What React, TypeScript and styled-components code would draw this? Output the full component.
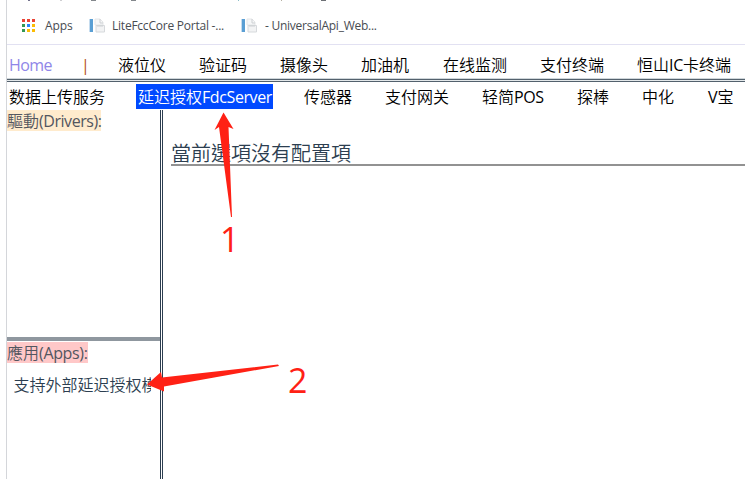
import React from 'react';
import styled, { createGlobalStyle } from 'styled-components';

const Global = createGlobalStyle`
  * { box-sizing: border-box; }
  body { margin: 0; background: #fff; overflow: hidden; }
`;

const Page = styled.div`
  position: relative;
  width: 745px;
  height: 479px;
  padding-left: 6px;
  overflow: hidden;
  background: #fff;
  color: #2c3e50;
  font-family: 'Open Sans', 'Noto Sans CJK SC', sans-serif;
  font-size: 16px;
`;

const Frame = styled.div`
  display: flex;
  flex-direction: column;
  height: 100%;
  border-left: 1px solid #d4d6da;
`;

const AddressBar = styled.div`
  height: 4px;
  flex: none;
  display: flex;
  align-items: flex-start;
`;

const Descender = styled.span<{ $gap: number; $width: number; $color: string }>`
  flex: none;
  width: ${(p) => p.$width}px;
  height: 1px;
  margin-left: ${(p) => p.$gap}px;
  background: ${(p) => p.$color};
`;

const Bookmarks = styled.div`
  height: 41px;
  flex: none;
  display: flex;
  align-items: center;
  padding: 3px 0 0 15px;
  border-bottom: 1px solid #e2e1f2;
`;

const Bookmark = styled.div<{ $width: number; $spacing?: number; $gap: number }>`
  display: flex;
  align-items: center;
  gap: ${(p) => p.$gap}px;
  width: ${(p) => p.$width}px;
  font-size: 12px;
  letter-spacing: ${(p) => p.$spacing ?? 0}px;
  color: #484c52;
  white-space: nowrap;
  svg { flex: none; }
`;

const NavRow = styled.nav<{ $height: number; $top?: number }>`
  display: flex;
  align-items: center;
  flex: none;
  height: ${(p) => p.$height}px;
  padding: ${(p) => p.$top ?? 0}px 0 0 2px;
  font-weight: 350;
`;

const NavItem = styled.span<{ $width: number; $color?: string }>`
  flex: none;
  width: ${(p) => p.$width}px;
  line-height: 24px;
  color: ${(p) => p.$color ?? '#000'};
  white-space: nowrap;
`;

const Latin = styled.span<{ $spacing: number }>`
  font-weight: 400;
  letter-spacing: ${(p) => p.$spacing}px;
`;

const Selected = styled.mark`
  display: block;
  width: 137px;
  height: 25px;
  margin-left: -2px;
  padding-left: 2px;
  line-height: 26px;
  background: #0049ff;
  color: #fff;
`;

const DoubleRule = styled.div`
  flex: none;
  height: 4px;
  background: linear-gradient(#cfd6da 1px, #53616d 1px 2px, #e3e8ea 2px 3px, #53616d 3px);
`;

const Body = styled.div`
  flex: 1;
  display: flex;
  min-height: 0;
  font-weight: 350;
`;

const Sidebar = styled.aside`
  flex: none;
  width: 156px;
  border-right: 3px double #2c3e50;
`;

const Section = styled.section<{ $height: number; $top: number; $ruled?: boolean }>`
  height: ${(p) => p.$height}px;
  padding-top: ${(p) => p.$top}px;
  ${(p) => p.$ruled && `
    border-bottom: 4px solid #8f979f;
  `}
`;

const Label = styled.span<{ $bg: string; $width: number; $line: number }>`
  display: block;
  width: ${(p) => p.$width}px;
  height: 21px;
  line-height: ${(p) => p.$line}px;
  background: ${(p) => p.$bg};
  color: #53565f;
  font-family: 'Open Sans', 'Noto Sans CJK TC', sans-serif;
  white-space: nowrap;
`;

const AppEntry = styled.div`
  width: 137px;
  margin: 10px 0 0 6.5px;
  line-height: 25px;
  overflow: hidden;
  white-space: nowrap;
`;

const Content = styled.main`
  flex: 1;
  padding: 31px 0 0 8px;
`;

const Heading = styled.h1`
  margin: 0;
  height: 25px;
  border-bottom: 2px solid #929292;
  font-family: 'Noto Sans CJK TC', sans-serif;
  font-size: 20px;
  font-weight: 350;
  line-height: 24px;
`;

const Annotations = styled.svg`
  position: absolute;
  inset: 0;
  pointer-events: none;
`;

const Numeral = styled.span<{ $x: number; $y: number }>`
  position: absolute;
  left: ${(p) => p.$x}px;
  top: ${(p) => p.$y}px;
  color: #ff2115;
  font-size: 34px;
  line-height: 40px;
`;

const dots = ['#ea4335', '#ea4335', '#ea4335', '#349854', '#2684fc', '#fbbc04', '#349854', '#fbbc04', '#fbbc04'];

const AppsIcon = () => (
  <svg width="14" height="14" viewBox="0 0 14 14" shapeRendering="crispEdges">
    {dots.map((c, i) => (
      <rect key={i} x={(i % 3) * 5} y={Math.floor(i / 3) * 5} width="3" height="3" fill={c} />
    ))}
  </svg>
);

const PageIcon = () => (
  <svg width="16" height="16" viewBox="0 0 16 16">
    <rect x="0" y="1" width="1" height="13" fill="#c5dcef" />
    <rect x="1" y="1" width="3" height="13" fill="#5a9fd4" />
    <path d="M6 1h5l3 3v3H6z" fill="#f6f7f8" stroke="#e4e6e8" />
    <path d="M7 7.500h8.500v6.500H7z" fill="#f2f3f4" stroke="#d6d9dc" />
    <path d="M11 1v4h3M8 8h6" fill="none" stroke="#cdd0d3" />
  </svg>
);

const descenders = [
  { gap: 21, width: 2, color: '#74738d' },
  { gap: 30, width: 2, color: '#cfcfd2' },
  { gap: 29, width: 5, color: '#83878c' },
  { gap: 35, width: 5, color: '#83878c' },
  { gap: 102, width: 1, color: '#8dbfc8' },
  { gap: 42, width: 1, color: '#b5b0a2' },
  { gap: 39, width: 5, color: '#6d7075' },
];

const primary = [
  { text: '液位仪', width: 81 },
  { text: '验证码', width: 81 },
  { text: '摄像头', width: 81 },
  { text: '加油机', width: 82 },
  { text: '在线监测', width: 97 },
  { text: '支付终端', width: 97 },
];

export default function App() {
  return (
    <Page>
      <Global />
      <Frame>
        <AddressBar>
          {descenders.map((d, i) => (
            <Descender key={i} $gap={d.gap} $width={d.width} $color={d.color} />
          ))}
        </AddressBar>
        <Bookmarks>
          <Bookmark $width={67} $gap={9} $spacing={-0.1}><AppsIcon />Apps</Bookmark>
          <Bookmark $width={152} $gap={7} $spacing={-0.23}><PageIcon />LiteFccCore Portal -...</Bookmark>
          <Bookmark $width={150} $gap={8} $spacing={-0.25}><PageIcon />- UniversalApi_Web...</Bookmark>
        </Bookmarks>
        <NavRow $height={33} $top={7}>
          <NavItem $width={72} $color="#8f86e8"><Latin $spacing={-0.6}>Home</Latin></NavItem>
          <NavItem $width={37} $color="#b3501b"><Latin $spacing={0}>|</Latin></NavItem>
          {primary.map((n) => <NavItem key={n.text} $width={n.width}>{n.text}</NavItem>)}
          <NavItem $width={108}>恒山<Latin $spacing={-0.3}>IC</Latin>卡终端</NavItem>
        </NavRow>
        <DoubleRule />
        <NavRow $height={28} $top={1}>
          <NavItem $width={129}>数据上传服务</NavItem>
          <NavItem $width={166}><Selected>延迟授权<Latin $spacing={-0.4}>FdcServer</Latin></Selected></NavItem>
          <NavItem $width={81}>传感器</NavItem>
          <NavItem $width={97}>支付网关</NavItem>
          <NavItem $width={95}>轻简<Latin $spacing={-0.4}>POS</Latin></NavItem>
          <NavItem $width={65}>探棒</NavItem>
          <NavItem $width={66}>中化</NavItem>
          <NavItem $width={37}><Latin $spacing={0}>V</Latin>宝</NavItem>
        </NavRow>
        <Body>
          <Sidebar>
            <Section $height={231} $top={0} $ruled>
              <Label $bg="#ffebcd" $width={94} $line={23}>驅動<Latin $spacing={-0.45}>(Drivers):</Latin></Label>
            </Section>
            <Section $height={137} $top={1}>
              <Label $bg="#ffc8c8" $width={81} $line={22}>應用<Latin $spacing={-0.35}>(Apps):</Latin></Label>
              <AppEntry>支持外部延迟授权模式</AppEntry>
            </Section>
          </Sidebar>
          <Content>
            <Heading>當前選項沒有配置項</Heading>
          </Content>
        </Body>
      </Frame>
      <Annotations width="745" height="479" viewBox="0 0 745 479" fill="#ff2115">
        <path d="M223.500 112.500L233.500 129L228.500 127L232 217H231L219 127L214.500 130Z" />
        <path d="M147 384.500L161 372L162 377.500L278 364.500L279 366L164 386.500L164 391.500Z" />
      </Annotations>
      <Numeral $x={220} $y={219}>1</Numeral>
      <Numeral $x={288} $y={360}>2</Numeral>
    </Page>
  );
}
